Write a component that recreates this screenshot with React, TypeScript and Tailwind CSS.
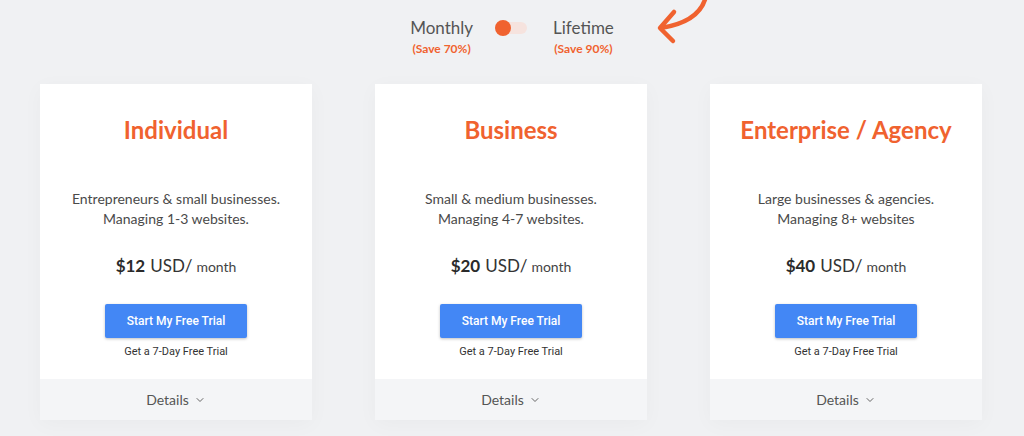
import { ChevronDown } from "lucide-react";

type Plan = {
  name: string;
  lines: string[];
  price: string;
};

const PLANS: Plan[] = [
  {
    name: "Individual",
    lines: ["Entrepreneurs & small businesses.", "Managing 1-3 websites."],
    price: "$12",
  },
  {
    name: "Business",
    lines: ["Small & medium businesses.", "Managing 4-7 websites."],
    price: "$20",
  },
  {
    name: "Enterprise / Agency",
    lines: ["Large businesses & agencies.", "Managing 8+ websites"],
    price: "$40",
  },
];

function PlanCard({ plan }: { plan: Plan }) {
  return (
    <div className="flex w-[272px] flex-col bg-white shadow-[0_4px_20px_rgba(0,0,0,0.03)]">
      <div className="flex flex-col items-center pt-[34px] pb-[20px]">
        <h2 className="text-[24px] leading-[24px] font-bold text-[#f0622f]">
          {plan.name}
        </h2>
        <div className="mt-[47px] flex flex-col items-center text-[14px] leading-[20px] text-[#4a4a4a]">
          {plan.lines.map((line) => (
            <span key={line}>{line}</span>
          ))}
        </div>
        <div className="mt-[25px] flex items-baseline leading-[24px] text-[#2a2a2a]">
          <span className="text-[17px] font-bold">{plan.price}</span>
          <span className="ml-[5px] text-[17px] text-[#333]">USD/</span>
          <span className="ml-[4px] text-[14px] text-[#444]">month</span>
        </div>
        <button className="mt-[25px] h-[34px] w-[142px] rounded-[2px] bg-[#4387f5] font-['Roboto',sans-serif] text-[12px] font-medium text-white shadow-[0_1px_3px_rgba(0,0,0,0.25)]">
          Start My Free Trial
        </button>
        <span className="mt-[7px] font-['Roboto',sans-serif] text-[11px] leading-[14px] text-[#333]">
          Get a 7-Day Free Trial
        </span>
      </div>
      <div className="flex h-[41px] items-center justify-center gap-[5px] bg-[#f4f5f7] text-[14px] text-[#555]">
        <span>Details</span>
        <ChevronDown size={12} strokeWidth={2} className="mt-[1px] text-[#666]" />
      </div>
    </div>
  );
}

export default function App() {
  return (
    <div className="relative h-[436px] w-[1024px] overflow-hidden bg-[#f0f1f3] font-['Lato',sans-serif]">
      <svg
        className="absolute top-0 left-[650px]"
        width="70"
        height="50"
        viewBox="0 0 70 50"
        fill="none"
      >
        <path
          d="M56 -4 C52 14 36 24 11 28"
          stroke="#f0622f"
          strokeWidth="4.5"
          strokeLinecap="round"
        />
        <path
          d="M24 12 L10 28 L23 41"
          stroke="#f0622f"
          strokeWidth="4.5"
          strokeLinecap="round"
          strokeLinejoin="round"
        />
      </svg>

      <div className="flex justify-center pt-[17px]">
        <div className="flex items-start gap-[24px]">
          <div className="flex flex-col items-center">
            <span className="text-[17px] leading-[22px] text-[#555]">Monthly</span>
            <span className="mt-[1px] text-[12px] font-bold text-[#f0622f]">(Save 70%)</span>
          </div>
          <div className="relative mt-[5px] h-[12px] w-[30px] rounded-full bg-[#f6e3de]">
            <div className="absolute top-[-2px] left-[-2px] h-[16px] w-[16px] rounded-full bg-[#f0622f]" />
          </div>
          <div className="ml-[2px] flex flex-col items-center">
            <span className="text-[17px] leading-[22px] text-[#555]">Lifetime</span>
            <span className="mt-[1px] text-[12px] font-bold text-[#f0622f]">(Save 90%)</span>
          </div>
        </div>
      </div>

      <div className="mt-[26px] flex gap-[63px] pl-[40px]">
        {PLANS.map((plan) => (
          <PlanCard key={plan.name} plan={plan} />
        ))}
      </div>
    </div>
  );
}
